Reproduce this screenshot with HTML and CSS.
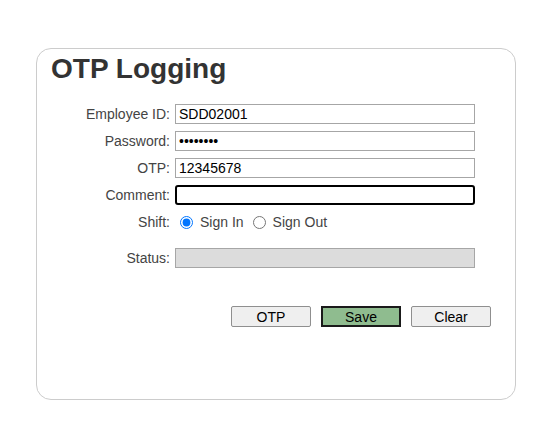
FILE: index.html
```html
<!DOCTYPE html>
<html>
<head>
<meta charset="utf-8">
<link rel="stylesheet" href="styles.css">
</head>
<body>
<div class="card">
  <h1 class="title">OTP Logging</h1>
  <div class="form">
    <label class="lbl">Employee ID:</label>
    <input class="field" type="text" value="SDD02001">
    <label class="lbl">Password:</label>
    <input class="field" type="password" value="password">
    <label class="lbl">OTP:</label>
    <input class="field" type="text" value="12345678">
    <label class="lbl">Comment:</label>
    <input class="field focused" type="text" value="">
    <label class="lbl shift-lbl">Shift:</label>
    <div class="radios">
      <label class="opt"><input type="radio" name="shift" checked><span>Sign In</span></label>
      <label class="opt"><input type="radio" name="shift"><span>Sign Out</span></label>
    </div>
    <label class="lbl status-lbl">Status:</label>
    <input class="field status" type="text" disabled>
  </div>
  <div class="buttons">
    <button class="btn">OTP</button>
    <button class="btn save">Save</button>
    <button class="btn">Clear</button>
  </div>
</div>
</body>
</html>
```
FILE: styles.css
```css
html, body {
  margin: 0;
  padding: 0;
  background: #fff;
  font-family: "Liberation Sans", Arial, sans-serif;
}
body {
  padding: 48px 0 0 36px;
}
.card {
  box-sizing: border-box;
  width: 480px;
  height: 352px;
  border: 1px solid #cccccc;
  border-radius: 15px;
  padding: 4px 24px 0 14px;
}
.title {
  margin: 0;
  font-size: 28px;
  line-height: 32px;
  font-weight: bold;
  color: #333;
}
.form {
  margin-top: 19px;
  display: grid;
  grid-template-columns: 119px 300px;
  column-gap: 5px;
  row-gap: 7px;
  align-items: center;
}
.lbl {
  text-align: right;
  font-size: 14px;
  color: #444;
}
.field {
  box-sizing: border-box;
  width: 300px;
  height: 20px;
  margin: 0;
  border: 1px solid #a6a6a6;
  padding: 0 3px;
  font-family: "Liberation Sans", Arial, sans-serif;
  font-size: 14px;
  color: #000;
  background: #fff;
  outline: none;
}
.field.focused {
  border: 2px solid #000;
  border-radius: 3px;
}
.field.status {
  background: #dcdcdc;
  border-color: #a6a6a6;
  margin-top: 9px;
}
.status-lbl {
  margin-top: 9px;
}
.radios {
  display: flex;
  align-items: center;
  height: 20px;
  font-size: 14px;
  color: #444;
}
.opt {
  display: flex;
  align-items: center;
}
.opt input {
  margin: 0 7px 0 5px;
  width: 13px;
  height: 13px;
}
.opt span {
  margin-right: 4px;
}
.buttons {
  margin-top: 38px;
  display: flex;
  justify-content: flex-end;
  gap: 10px;
}
.btn {
  box-sizing: border-box;
  width: 80px;
  height: 21px;
  margin: 0;
  padding: 0;
  font-family: "Liberation Sans", Arial, sans-serif;
  font-size: 14px;
  color: #000;
  background: #efefef;
  border: 1px solid #8f8f8f;
  border-radius: 2px;
}
.btn.save {
  background: #8fbc8f;
  border: 2px solid #1a1a1a;
  border-radius: 0;
}
```
